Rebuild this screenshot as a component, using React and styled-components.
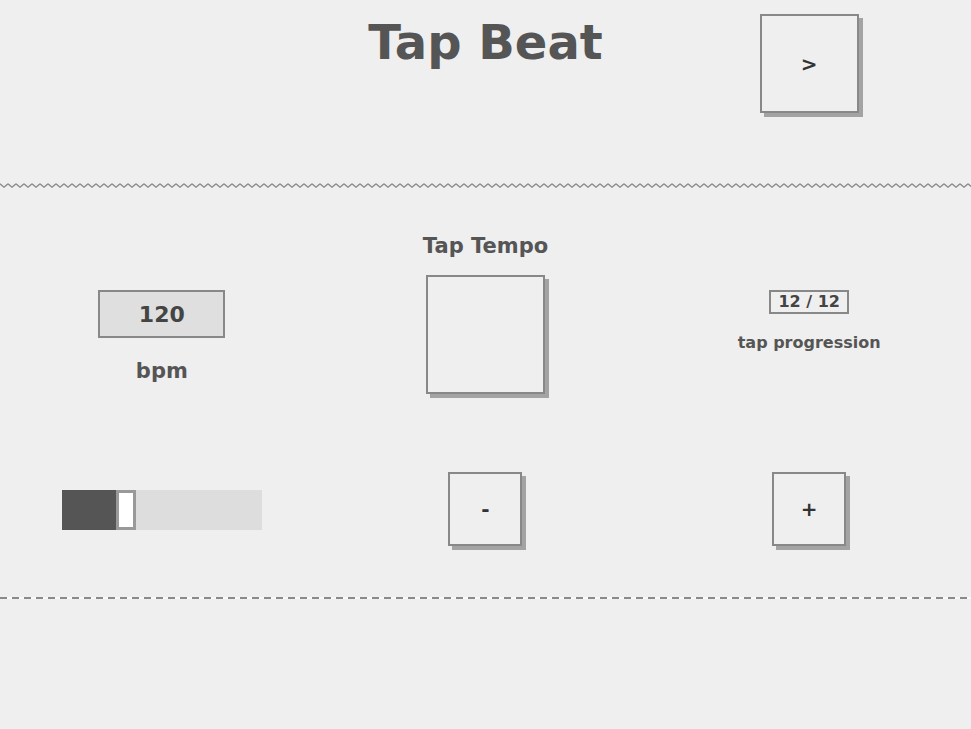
import React from 'react';
import styled, { createGlobalStyle } from 'styled-components';

const GlobalStyle = createGlobalStyle`
  html, body {
    margin: 0;
    padding: 0;
    background: #efefef;
  }
  body {
    font-family: "DejaVu Sans", Verdana, sans-serif;
    font-weight: bold;
  }
`;

const Page = styled.div`
  width: 100%;
  min-height: 729px;
  background: #efefef;
`;

const Header = styled.header`
  display: grid;
  grid-template-columns: repeat(3, 1fr);
  align-items: start;
  height: 183px;
  box-sizing: border-box;
  padding-top: 14px;
`;

const Title = styled.h1`
  grid-column: 2;
  margin: 0;
  text-align: center;
  font-size: 48px;
  line-height: 57px;
  color: #555;
`;

const Cell = styled.div`
  display: flex;
  flex-direction: column;
  align-items: center;
  padding-top: ${(p) => p.$top || 0}px;
`;

const ZigzagWrap = styled.div`
  height: 5px;
  line-height: 0;

  svg {
    display: block;
    width: 100%;
    height: 5px;
  }
`;

const Zigzag = () => (
  <ZigzagWrap>
    <svg>
      <defs>
        <pattern id="zz" width="8" height="5" patternUnits="userSpaceOnUse">
          <polyline
            points="0,0.8 4,4.2 8,0.8"
            fill="none"
            stroke="#8a8a8a"
            strokeWidth="1.3"
          />
        </pattern>
      </defs>
      <rect width="100%" height="5" fill="url(#zz)" />
    </svg>
  </ZigzagWrap>
);

const Main = styled.main`
  height: 409px;
  box-sizing: border-box;
  padding-top: 46px;
  display: grid;
  grid-template-columns: repeat(3, 1fr);
  grid-template-rows: 238px auto;
  align-items: start;
`;

const Dashed = styled.div`
  height: 2px;
  background: repeating-linear-gradient(
    90deg,
    #8a8a8a 0 7px,
    #f9f9f9 7px 12px
  );
`;

const Button = styled.button`
  width: ${(p) => p.$size}px;
  height: ${(p) => p.$size}px;
  box-sizing: border-box;
  border: 2px solid #888;
  background: #efefef;
  box-shadow: 4px 4px 0 #a3a3a3;
  display: flex;
  align-items: center;
  justify-content: center;
  padding: 0;
  font-family: "DejaVu Sans", Verdana, sans-serif;
  font-weight: bold;
  font-size: 20px;
  color: #333;
  cursor: pointer;
`;

const Label = styled.div`
  font-size: ${(p) => p.$size || 21}px;
  line-height: ${(p) => (p.$size ? p.$size + 4 : 24)}px;
  color: #555;
  margin-top: ${(p) => p.$gap || 0}px;
`;

const BpmBox = styled.div`
  width: 127px;
  height: 48px;
  box-sizing: border-box;
  border: 2px solid #888;
  background: #dfdfdf;
  display: flex;
  align-items: center;
  justify-content: center;
  font-size: 22px;
  color: #444;
`;

const Progress = styled.div`
  height: 24px;
  box-sizing: border-box;
  padding: 0 7px;
  border: 2px solid #888;
  font-size: 16px;
  line-height: 20px;
  color: #444;
`;

const Track = styled.div`
  width: 200px;
  height: 40px;
  margin-top: 18px;
  background: #dddddd;
  display: flex;
`;

const Fill = styled.div`
  height: 100%;
  background: #555;
`;

const Thumb = styled.div`
  width: 20px;
  height: 100%;
  box-sizing: border-box;
  border: 3px solid #999;
  background: #fff;
`;

const Slider = ({ value, min, max }) => {
  const pct = (value - min) / (max - min);
  return (
    <Track>
      <Fill style={{ width: `${pct * 180}px` }} />
      <Thumb />
    </Track>
  );
};

const App = () => {
  const bpm = 120;
  return (
    <Page>
      <GlobalStyle />
      <Header>
        <Title>Tap Beat</Title>
        <Cell>
          <Button $size={99}>&gt;</Button>
        </Cell>
      </Header>
      <Zigzag />
      <Main>
        <Cell $top={56}>
          <BpmBox>{bpm}</BpmBox>
          <Label $gap={21}>bpm</Label>
        </Cell>
        <Cell>
          <Label>Tap Tempo</Label>
          <Label $gap={17}>
            <Button $size={119} />
          </Label>
        </Cell>
        <Cell $top={56}>
          <Progress>12 / 12</Progress>
          <Label $size={16} $gap={19}>tap progression</Label>
        </Cell>
        <Cell>
          <Slider value={bpm} min={30} max={330} />
        </Cell>
        <Cell>
          <Button $size={74}>-</Button>
        </Cell>
        <Cell>
          <Button $size={74}>+</Button>
        </Cell>
      </Main>
      <Dashed />
    </Page>
  );
};

export default App;
